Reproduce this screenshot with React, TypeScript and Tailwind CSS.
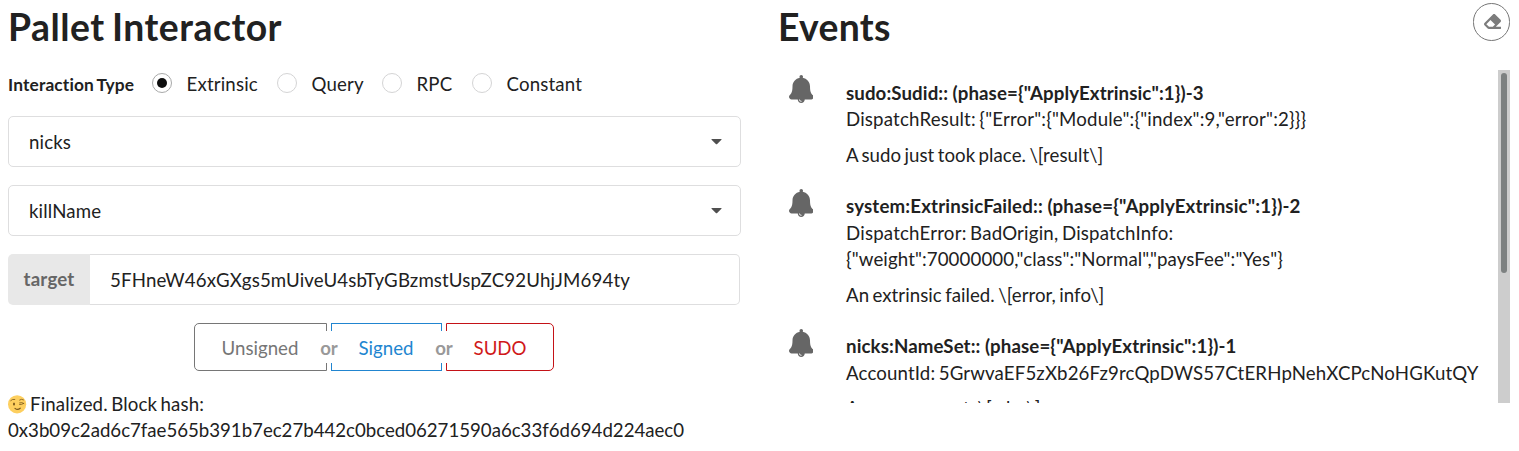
import React from 'react';
import { FaEraser } from 'react-icons/fa';

function Radio({ label, checked, className }: { label: string; checked?: boolean; className: string }) {
  return (
    <label className={`flex items-center ${className}`}>
      <span
        className={`mb-[3px] flex size-5 shrink-0 items-center justify-center rounded-full border ${
          checked ? 'border-[#a8a9a9]' : 'border-[#d4d4d5]'
        }`}
      >
        {checked && <span className="size-2.5 rounded-full bg-[#0d0d0d]" />}
      </span>
      <span className="ml-[14.5px] tracking-[0.16px]">{label}</span>
    </label>
  );
}

function Dropdown({ value }: { value: string }) {
  return (
    <div className="mb-[18px] flex h-[51px] items-center justify-between rounded-[5px] border border-[#dededf] pr-[18px] pl-5">
      <span className="pt-0.5 tracking-[0.14px]">{value}</span>
      <svg className="h-[6px] w-[11px]" viewBox="0 0 11 6">
        <path d="M1 0h9q1 0 .4.8L6.2 5q-.7.7-1.4 0L.6.8Q0 0 1 0z" fill="#4f4f4f" />
      </svg>
    </div>
  );
}

function Or() {
  return (
    <div className="relative w-1">
      <span className="absolute top-2 -left-[13px] flex h-8 w-[30px] items-center justify-center bg-white pt-0.5 font-bold text-[#999]">
        or
      </span>
    </div>
  );
}

function Bell() {
  return (
    <svg className="h-7 w-[24.5px] shrink-0" viewBox="0 0 448 512" fill="#666">
      <path d="M433.884 366.059C411.634 343.809 384 316.118 384 208c0-79.394-57.831-145.269-133.663-157.83A31.845 31.845 0 0 0 256 32c0-17.673-14.327-32-32-32s-32 14.327-32 32c0 6.75 2.095 13.008 5.663 18.17C121.831 62.731 64 128.606 64 208c0 108.118-27.643 135.809-49.893 158.059C-16.042 396.208 5.325 448 48.048 448H160c0 35.346 28.654 64 64 64s64-28.654 64-64h111.943c42.638 0 64.151-51.731 33.941-81.941zM224 472a8 8 0 0 1 0 16c-22.056 0-40-17.944-40-40h16c0 13.234 10.766 24 24 24z" />
    </svg>
  );
}

function Wink() {
  return (
    <svg className="mr-[3px] size-[19px]" viewBox="0 0 19 19" fill="none" stroke="#7a581c" strokeLinecap="round">
      <circle cx="9.1" cy="9.3" r="9.1" fill="#fdcf5f" stroke="none" />
      <ellipse cx="6" cy="9" rx="1" ry="1.6" fill="#7a581c" stroke="none" />
      <path d="M2.7 5.6Q4.4 3.8 6.8 4.4M11.6 5Q13.5 3.6 15.5 4.8" strokeWidth=".8" />
      <path d="M11.6 7.8Q14 7 15.8 8.4M11.6 9.6Q13.6 9.8 15.8 8.4" strokeWidth=".8" />
      <path d="M7 13.4Q9.6 15.6 12.2 13.2" strokeWidth="1.2" />
    </svg>
  );
}

const events = [
  {
    title: 'sudo:Sudid:: (phase={"ApplyExtrinsic":1})-3',
    titleTracking: 'tracking-[0.1px]',
    lines: [{ text: 'DispatchResult: {"Error":{"Module":{"index":9,"error":2}}}', tracking: 'tracking-[0.18px]' }],
    note: 'A sudo just took place. \\[result\\]',
  },
  {
    title: 'system:ExtrinsicFailed:: (phase={"ApplyExtrinsic":1})-2',
    titleTracking: 'tracking-[0.165px]',
    lines: [
      { text: 'DispatchError: BadOrigin, DispatchInfo:', tracking: 'tracking-[0.2px]' },
      { text: '{"weight":70000000,"class":"Normal","paysFee":"Yes"}', tracking: 'tracking-[0.11px]' },
    ],
    note: 'An extrinsic failed. \\[error, info\\]',
  },
  {
    title: 'nicks:NameSet:: (phase={"ApplyExtrinsic":1})-1',
    titleTracking: 'tracking-[0.11px]',
    lines: [
      { text: 'AccountId: 5GrwvaEF5zXb26Fz9rcQpDWS57CtERHpNehXCPcNoHGKutQY', tracking: 'tracking-[0.135px]' },
    ],
    note: 'A name was set. \\[who\\]',
  },
];

export default function App() {
  return (
    <div className="flex h-[451px] overflow-hidden bg-white pr-[9px] pl-2 font-[Lato,sans-serif] text-[18.67px] leading-[26.4px] [word-spacing:-1.4px] text-[#212121]">
      <section className="w-[733px]">
        <h1 className="pt-[3px] text-[37.33px] leading-12 font-bold tracking-[0.5px] [word-spacing:-2.2px]">
          Pallet Interactor
        </h1>
        <div className="mt-5 flex h-[27px] items-center">
          <span className="w-36 pt-0.5 text-[17.33px] font-bold tracking-[0.15px]">Interaction Type</span>
          <Radio label="Extrinsic" checked className="w-[125px]" />
          <Radio label="Query" className="w-[105px]" />
          <Radio label="RPC" className="w-[90px]" />
          <Radio label="Constant" className="" />
        </div>
        <div className="mt-[18px]">
          <Dropdown value="nicks" />
          <Dropdown value="killName" />
          <div className="flex h-[51px] w-[732px]">
            <div className="flex w-[82px] items-center justify-center rounded-l-[5px] bg-[#e8e8e8] font-bold tracking-[0.2px] text-[#666]">
              target
            </div>
            <div className="flex flex-1 items-center rounded-r-[5px] border border-l-0 border-[#dededf] pt-0.5 pl-5 tracking-[0.146px]">
              5FHneW46xGXgs5mUiveU4sbTyGBzmstUspZC92UhjJM694ty
            </div>
          </div>
        </div>
        <div className="mt-[18px] ml-[186px] flex h-12">
          <div className="flex w-[133px] items-center justify-center rounded-l-[5px] border border-[#767676] pt-0.5 pr-px text-[#767676]">
            Unsigned
          </div>
          <Or />
          <div className="flex w-[111px] items-center justify-center border border-[#2185d0] pt-0.5 pr-px text-[#2185d0]">
            Signed
          </div>
          <Or />
          <div className="flex w-[108px] items-center justify-center rounded-r-[5px] border border-[#c41217] pt-0.5 text-[#d01919]">
            SUDO
          </div>
        </div>
        <div className="mt-5">
          <div className="flex items-center tracking-[0.12px]">
            <Wink />
            Finalized. Block hash:
          </div>
          <div className="tracking-[-0.015px]">0x3b09c2ad6c7fae565b391b7ec27b442c0bced06271590a6c33f6d694d224aec0</div>
        </div>
      </section>
      <section className="ml-[37px] flex-1">
        <div className="flex h-[70px] items-start justify-between">
          <h1 className="pt-[3px] text-[37.33px] leading-12 font-bold tracking-[0.3px]">Events</h1>
          <button className="mt-[3px] flex h-[38px] w-[37px] items-center justify-center rounded-full border border-[#767676] pb-px pl-px text-[#7c7c7c]">
            <FaEraser size={17} />
          </button>
        </div>
        <div className="flex h-[333px] overflow-hidden leading-[26.5px]">
          <div className="flex-1 pt-[5.3px] pl-[10.5px]">
            {events.map((event) => (
              <article key={event.title} className="mb-5 flex">
                <Bell />
                <div className="ml-[33px] pt-[4.55px] whitespace-nowrap">
                  <div className={`font-bold [word-spacing:-0.2px] ${event.titleTracking}`}>{event.title}</div>
                  {event.lines.map((line) => (
                    <div key={line.text} className={line.tracking}>
                      {line.text}
                    </div>
                  ))}
                  <p className="mt-[9.33px] tracking-[0.04px]">{event.note}</p>
                </div>
              </article>
            ))}
          </div>
          <div className="w-3 shrink-0 bg-[#cdcdcd] px-[3px] pt-[3px]">
            <div className="h-[200px] rounded-full bg-[#7d8181]" />
          </div>
        </div>
      </section>
    </div>
  );
}
